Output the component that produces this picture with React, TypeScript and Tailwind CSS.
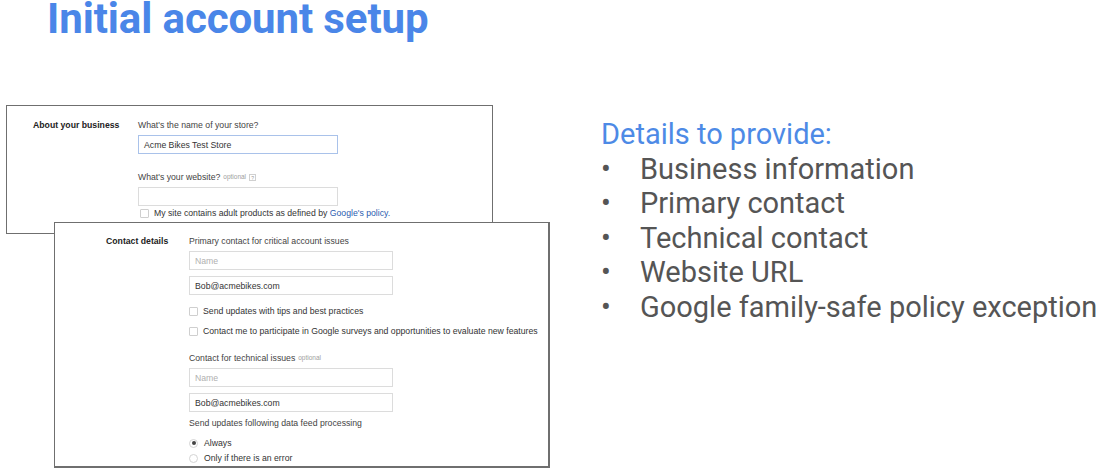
const form = "font-['Liberation_Sans',Arial,sans-serif] text-[8.7px] leading-[12px]";

const TextBox = ({
  value,
  placeholder,
  focused,
  wide,
}: {
  value?: string;
  placeholder?: string;
  focused?: boolean;
  wide?: boolean;
}) => (
  <div
    className={`h-[19px] ${wide ? 'w-[204px]' : 'w-[200px]'} flex items-center pl-[5px] bg-white border ${
      focused ? 'border-[#a9c2ea]' : 'border-[#dcdcdc]'
    }`}
  >
    {value ? (
      <span className="text-[#333]">{value}</span>
    ) : (
      <span className="text-[#b0b0b0]">{placeholder}</span>
    )}
  </div>
);

const CheckRow = ({ children, className = '' }: { children: React.ReactNode; className?: string }) => (
  <div className={`flex items-center h-[12px] ${className}`}>
    <span className="w-[9px] h-[9px] border border-[#cfcfcf] bg-white rounded-[1px] shrink-0" />
    <span className="ml-[5px] text-[#333] whitespace-nowrap">{children}</span>
  </div>
);

const RadioRow = ({ label, checked, className = '' }: { label: string; checked?: boolean; className?: string }) => (
  <div className={`flex items-center h-[12px] ${className}`}>
    <span className="w-[9px] h-[9px] rounded-full border border-[#d4d4d4] bg-white flex items-center justify-center shrink-0">
      {checked && <span className="w-[4px] h-[4px] rounded-full bg-[#444]" />}
    </span>
    <span className="ml-[6px] text-[#333]">{label}</span>
  </div>
);

const Optional = () => <span className="ml-[3px] text-[6.5px] text-[#a0a0a0]">optional</span>;

export default function App() {
  const bullets = [
    'Business information',
    'Primary contact',
    'Technical contact',
    'Website URL',
    'Google family-safe policy exception',
  ];

  return (
    <div className="w-[1109px] h-[473px] bg-white overflow-hidden">
      <h1 className="h-[38px] pl-[47px] font-['Roboto',sans-serif] font-bold text-[42px] leading-[38px] text-[#4a86e8] tracking-[-0.1px]">
        Initial account setup
      </h1>

      <div className="flex mt-[67px]">
        {/* screenshot of the setup form */}
        <div className={`w-[550px] pl-[6px] ${form}`}>
          <div className="w-[487px] h-[129px] border border-[#6f6f6f] bg-white grid grid-cols-[105px_1fr] pl-[26px] pt-[13px]">
            <div className="font-bold text-[#222]">About your business</div>
            <div className="flex flex-col">
              <div className="text-[#444]">What's the name of your store?</div>
              <div className="mt-[4px]">
                <TextBox value="Acme Bikes Test Store" focused />
              </div>
              <div className="mt-[17px] flex items-center text-[#444]">
                What's your website?
                <Optional />
                <span className="ml-[3px] w-[7px] h-[7px] border border-[#d0d0d0] text-[5px] leading-[6px] text-center text-[#999]">?</span>
              </div>
              <div className="mt-[4px]">
                <TextBox />
              </div>
              <CheckRow className="mt-[1px] ml-[2px]">
                My site contains adult products as defined by <span className="text-[#2a5db0]">Google's policy.</span>
              </CheckRow>
            </div>
          </div>

          <div className="relative z-10 ml-[48px] -mt-[12px] w-[496px] h-[246px] border border-[#6f6f6f] border-r-2 border-b-2 bg-white grid grid-cols-[83px_1fr] pl-[51px] pt-[12px]">
            <div className="font-bold text-[#222]">Contact details</div>
            <div className="flex flex-col">
              <div className="text-[#444]">Primary contact for critical account issues</div>
              <div className="mt-[4px]">
                <TextBox placeholder="Name" wide />
              </div>
              <div className="mt-[6px]">
                <TextBox value="Bob@acmebikes.com" wide />
              </div>
              <CheckRow className="mt-[10px]">Send updates with tips and best practices</CheckRow>
              <CheckRow className="mt-[8px]">
                Contact me to participate in Google surveys and opportunities to evaluate new features
              </CheckRow>
              <div className="mt-[15px] flex items-center text-[#444]">
                Contact for technical issues
                <Optional />
              </div>
              <div className="mt-[4px]">
                <TextBox placeholder="Name" wide />
              </div>
              <div className="mt-[6px]">
                <TextBox value="Bob@acmebikes.com" wide />
              </div>
              <div className="mt-[5px] text-[#444]">Send updates following data feed processing</div>
              <RadioRow className="mt-[8px]" label="Always" checked />
              <RadioRow className="mt-[3px]" label="Only if there is an error" />
            </div>
          </div>
        </div>

        {/* right column */}
        <div className="pl-[51px] pt-[12px] font-['Roboto',sans-serif] text-[29px] leading-[34.6px]">
          <div className="text-[#4d8ae6]">Details to provide:</div>
          <ul>
            {bullets.map((b) => (
              <li key={b} className="flex text-[#555]">
                <span className="w-[39px] shrink-0">•</span>
                <span className="whitespace-nowrap">{b}</span>
              </li>
            ))}
          </ul>
        </div>
      </div>
    </div>
  );
}
